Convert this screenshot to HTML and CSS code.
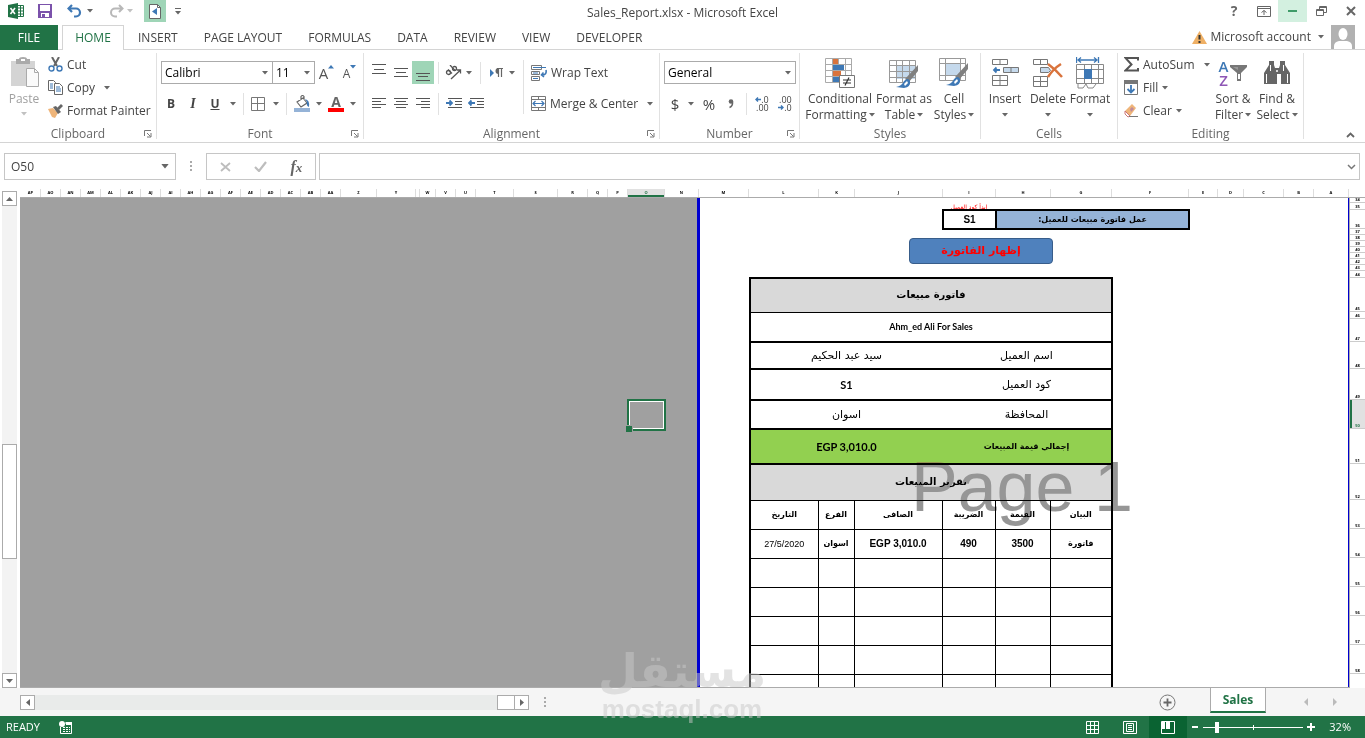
FILE: index.html
```html
<!DOCTYPE html>
<html lang="en">
<head>
<meta charset="utf-8">
<title>Sales_Report.xlsx - Microsoft Excel</title>
<link rel="stylesheet" href="styles.css">
</head>
<body>
<svg class="defs" aria-hidden="true">
  <symbol id="caret" viewBox="0 0 6 4"><path d="M0 0h6L3 3.5z" fill="#666"/></symbol>
  <symbol id="launch" viewBox="0 0 8 8"><path d="M.5 6V.5H7M3 3l3.500 3.500M7 3v4H3" fill="none" stroke="#777"/></symbol>
</svg>
<div class="app">
<header class="titlebar">
  <div class="quick">
    <svg width="16" height="16" viewBox="0 0 16 16"><path d="M9 2.500h6.500v11H9z" fill="#fff" stroke="#217346"/><path d="M10 5h5M10 8h5M10 11h5M12.500 3v10" stroke="#217346"/><path d="M0 2l10-2v16L0 14z" fill="#217346"/><path d="M2.500 5l4.500 6M7 5l-4.500 6" stroke="#fff" stroke-width="1.600"/></svg>
    <button aria-label="Save"><svg width="14" height="14" viewBox="0 0 14 14"><path d="M0 0h14v14H0z" fill="#7b52ab"/><path d="M2 1h10v6H2zM3 9h8v4H3z" fill="#fff"/><path d="M4 10h3v3H4z" fill="#7b52ab"/></svg></button>
    <button aria-label="Undo"><svg width="15" height="14" viewBox="0 0 15 14"><path d="M5 1L1.500 4.500 5 8M2 4.500h7a4 4 0 0 1 0 8H7" fill="none" stroke="#3e78b5" stroke-width="2.200"/></svg></button>
    <button aria-label="Undo list"><svg width="6" height="4"><use href="#caret"/></svg></button>
    <button class="redo" aria-label="Redo"><svg width="15" height="14" viewBox="0 0 15 14"><path d="M10 1l3.500 3.500L10 8M13 4.500H6a4 4 0 0 0 0 8h2" fill="none" stroke="#b8b8b8" stroke-width="2"/></svg></button>
    <button class="faded" aria-label="Redo list"><svg width="6" height="4"><use href="#caret"/></svg></button>
    <button class="lit" aria-label="Sheet right-to-left"><svg width="12" height="15" viewBox="0 0 12 15"><path d="M.5.5h8l3 3v11H.5z" fill="#fff" stroke="#666"/><path d="M8.500.5v3h3" fill="none" stroke="#666"/><path d="M8 4v7L3 7.500z" fill="#3e78b5"/></svg></button>
    <button aria-label="Customize toolbar"><svg width="6" height="7" viewBox="0 0 6 7"><path d="M0 .5h6" stroke="#666"/><path d="M0 3h6L3 6.500z" fill="#666"/></svg></button>
  </div>
  <h1>Sales_Report.xlsx - Microsoft Excel</h1>
  <div class="winctl">
    <button class="help" aria-label="Help">?</button>
    <button aria-label="Ribbon options"><svg width="14" height="11" viewBox="0 0 14 11"><path d="M.5.5h13v10H.5zM.5 2.500h13M7 9V4.500M4.500 6.500L7 4.500l2.500 2" fill="none" stroke="#666"/></svg></button>
    <button class="min" aria-label="Minimize"><svg width="9" height="2"><path d="M0 1h9" stroke="#3f9b69" stroke-width="2"/></svg></button>
    <button aria-label="Restore"><svg width="11" height="10" viewBox="0 0 11 10"><path d="M.5 3.500h7v6h-7zM.5 4.500h7M3.500 3V.5h7v6H8M3 1.500h7" fill="none" stroke="#666"/></svg></button>
    <button aria-label="Close"><svg width="10" height="10" viewBox="0 0 10 10"><path d="M1 1l8 8M9 1L1 9" stroke="#666" stroke-width="2"/></svg></button>
  </div>
</header>
<nav class="tabs">
  <button class="file">FILE</button>
  <button class="active">HOME</button>
  <button>INSERT</button><button>PAGE LAYOUT</button><button>FORMULAS</button><button>DATA</button><button>REVIEW</button><button>VIEW</button><button>DEVELOPER</button>
  <div class="account">
    <svg width="15" height="13" viewBox="0 0 15 13"><path d="M7.500 0L15 13H0z" fill="#efb065"/><path d="M7.500 4v4.500M7.500 10v2" stroke="#333" stroke-width="2"/></svg>
    <button>Microsoft account <svg width="6" height="4"><use href="#caret"/></svg></button>
    <svg class="avatar" width="24" height="24" viewBox="0 0 24 24"><path d="M0 0h24v24H0z" fill="#b1b1b1"/><ellipse cx="12" cy="9" rx="4.500" ry="6" fill="#fff"/><path d="M3 24v-3q0-4 5-5h8q5 1 5 5v3z" fill="#fff"/></svg>
  </div>
</nav>
<section class="ribbon">
  <div class="group clipboard">
    <div class="body">
      <button class="big paste"><svg width="30" height="32" viewBox="0 0 30 32"><path d="M0 4h24v25H0z" fill="#d4d4d4"/><path d="M5 2h3q0-2 4-2t4 2h3v5H5z" fill="#aaa"/><path d="M10 2h4v2h-4z" fill="#fff"/><path d="M15.500 11.500h8l4 4v14h-12z" fill="#fafafa" stroke="#aaa"/><path d="M23.500 11.500v4h4" fill="none" stroke="#aaa"/></svg><span>Paste</span><svg class="faded" width="6" height="4"><use href="#caret"/></svg></button>
      <div class="list">
        <button><svg width="15" height="15" viewBox="0 0 15 15"><path d="M4 0l5 9M11 0L6 9" stroke="#666" stroke-width="2"/><circle cx="3.500" cy="11.500" r="2.500" fill="none" stroke="#3e78b5" stroke-width="1.400"/><circle cx="11.500" cy="11.500" r="2.500" fill="none" stroke="#3e78b5" stroke-width="1.400"/></svg>Cut</button>
        <button><svg width="15" height="15" viewBox="0 0 15 15"><path d="M.5.5h5l2 2v8h-7z" fill="#fff" stroke="#666"/><path d="M2 4h3M2 6h3M2 8h3" stroke="#3e78b5"/><path d="M6.500 3.500h5l3 3v8h-8z" fill="#fff" stroke="#666"/><path d="M8 7h4M8 9h5M8 11h5" stroke="#3e78b5"/></svg>Copy<svg class="far" width="6" height="4"><use href="#caret"/></svg></button>
        <button><svg width="15" height="14" viewBox="0 0 15 14"><path d="M0 5l5-1 5 5-3 5-3-1z" fill="#efb57a"/><path d="M5 3l3-1 5 6-3 2z" fill="#666"/><path d="M9 4l4-4 2 2-4 4z" fill="#666"/></svg>Format Painter</button>
      </div>
    </div>
    <div class="name"><span>Clipboard</span><button aria-label="Clipboard options"><svg width="8" height="8"><use href="#launch"/></svg></button></div>
  </div>
  <div class="group font">
    <div class="body rows">
      <div class="row">
        <label class="combo face"><select aria-label="Font"><option>Calibri</option></select><svg width="6" height="4"><use href="#caret"/></svg></label>
        <label class="combo size"><select aria-label="Font size"><option>11</option></select><svg width="6" height="4"><use href="#caret"/></svg></label>
        <button class="glyph grow" aria-label="Increase font size">A<svg width="6" height="4"><path d="M0 3.500h6L3 0z" fill="#3e78b5"/></svg></button>
        <button class="glyph shrink" aria-label="Decrease font size">A<svg width="6" height="4"><path d="M0 0h6L3 3.500z" fill="#3e78b5"/></svg></button>
      </div>
      <div class="row tools">
        <button class="glyph"><b>B</b></button><button class="glyph"><i>I</i></button><button class="glyph"><u>U</u></button><button aria-label="Underline list"><svg width="6" height="4"><use href="#caret"/></svg></button><hr>
        <button aria-label="Borders"><svg width="14" height="14" viewBox="0 0 14 14"><path d="M.5.5h13v13H.5zM6.500.5v13M.5 6.500h13" fill="none" stroke="#777"/></svg></button><button aria-label="Border list"><svg width="6" height="4"><use href="#caret"/></svg></button><hr>
        <button aria-label="Fill color"><svg width="16" height="17" viewBox="0 0 16 17"><path d="M0 13h16v4H0z" fill="#95b3d7"/><path d="M3 7l6-4 4 5-6 4zM7 5V1.500q1.500-2 3 0V5" fill="none" stroke="#666" stroke-width="1.200"/><path d="M11 4q5 1 4 8-3-1-2-5z" fill="#3e78b5"/></svg></button><button aria-label="Fill list"><svg width="6" height="4"><use href="#caret"/></svg></button>
        <button class="glyph fcolor" aria-label="Font color">A</button><button aria-label="Font color list"><svg width="6" height="4"><use href="#caret"/></svg></button>
      </div>
    </div>
    <div class="name"><span>Font</span><button aria-label="Font options"><svg width="8" height="8"><use href="#launch"/></svg></button></div>
  </div>
  <div class="group alignment">
    <div class="body">
      <div class="rows">
        <div class="row al1">
          <button aria-label="Top align"><svg width="14" height="17" viewBox="0 0 14 17"><path d="M0 .5h14M2 5.500h10M0 9.500h14" stroke="#555"/></svg></button>
          <button aria-label="Middle align"><svg width="14" height="17" viewBox="0 0 14 17"><path d="M0 4.500h14M2 8.500h10M0 12.500h14" stroke="#555"/></svg></button>
          <button class="lit" aria-label="Bottom align"><svg width="14" height="17" viewBox="0 0 14 17"><path d="M0 9.500h14M2 12.500h10M0 16.500h14" stroke="#555"/></svg></button><hr>
          <button aria-label="Orientation"><svg width="17" height="15" viewBox="0 0 17 15"><g fill="none" stroke="#555" stroke-width="1.300"><circle cx="3.500" cy="7.500" r="2"/><path d="M3 4.500l4 4"/><path d="M5 0l5 5.500"/><circle cx="9.500" cy="3.500" r="2"/><path d="M6 14L15 5.500M12 5h3.500v3.500"/></g></svg></button><button aria-label="Orientation list"><svg width="6" height="4"><use href="#caret"/></svg></button><hr>
          <button aria-label="Text direction"><svg width="13" height="10" viewBox="0 0 13 10"><path d="M0 1l4 4-4 4z" fill="#3e78b5"/><path d="M7 .5h6M8.500 1v8M11.500 1v8" stroke="#666" stroke-width="1.200"/><path d="M8.500 0v6a3 3 0 0 1 0-6z" fill="#666"/></svg></button><button aria-label="Direction list"><svg width="6" height="4"><use href="#caret"/></svg></button>
        </div>
        <div class="row al2">
          <button aria-label="Align left"><svg width="14" height="11" viewBox="0 0 14 11"><path d="M0 .5h14M0 3.500h9M0 6.500h14M0 9.500h9" stroke="#555"/></svg></button>
          <button aria-label="Center"><svg width="14" height="11" viewBox="0 0 14 11"><path d="M0 .5h14M2 3.500h10M0 6.500h14M2 9.500h10" stroke="#555"/></svg></button>
          <button aria-label="Align right"><svg width="14" height="11" viewBox="0 0 14 11"><path d="M0 .5h14M5 3.500h9M0 6.500h14M5 9.500h9" stroke="#555"/></svg></button><hr>
          <button aria-label="Decrease indent"><svg width="16" height="11" viewBox="0 0 16 11"><path d="M2 .5h14M9 3.500h7M9 6.500h7M2 9.500h14" stroke="#555"/><path d="M0 5h6M3.500 2.500L6 5 3.500 7.500" stroke="#3e78b5" stroke-width="1.800" fill="none"/></svg></button>
          <button aria-label="Increase indent"><svg width="16" height="11" viewBox="0 0 16 11"><path d="M2 .5h14M9 3.500h7M9 6.500h7M2 9.500h14" stroke="#555"/><path d="M7 5H1M3.500 2.500L1 5l2.500 2.500" stroke="#3e78b5" stroke-width="1.800" fill="none"/></svg></button>
        </div>
      </div>
      <hr class="tall">
      <div class="rows wraps">
        <button><svg width="16" height="16" viewBox="0 0 16 16"><path d="M.5.5h10v4H.5zM.5 6.500h8v3h-8zM.5 11.500h8v4h-8z" fill="none" stroke="#777"/><path d="M2 2.500h13M2 8h5M2 13.500h5" stroke="#3e78b5"/><path d="M15 5q1 5-4 5M12.500 7.500L10.500 10l2.500 2" fill="none" stroke="#3e78b5" stroke-width="1.600"/></svg>Wrap Text</button>
        <button><svg width="15" height="15" viewBox="0 0 15 15"><path d="M.5.5h14v14H.5zM.5 3.500h14M.5 11.500h14M7.500.5v3M7.500 11.500v3" fill="none" stroke="#777"/><path d="M2 7.500h11M4.500 5L2 7.500 4.500 10M10.500 5L13 7.500 10.500 10" fill="none" stroke="#3e78b5" stroke-width="1.200"/></svg>Merge &amp; Center<svg class="far" width="6" height="4"><use href="#caret"/></svg></button>
      </div>
    </div>
    <div class="name"><span>Alignment</span><button aria-label="Alignment options"><svg width="8" height="8"><use href="#launch"/></svg></button></div>
  </div>
  <div class="group number">
    <div class="body rows">
      <div class="row"><label class="combo format"><select aria-label="Number format"><option>General</option></select><svg width="6" height="4"><use href="#caret"/></svg></label></div>
      <div class="row nums">
        <button class="sym">$</button><button aria-label="Currency list"><svg width="6" height="4"><use href="#caret"/></svg></button><button class="sym">%</button>
        <button aria-label="Comma style"><svg width="6" height="10" viewBox="0 0 6 10"><circle cx="3" cy="2.500" r="2.300" fill="#666"/><path d="M4.500 3q.5 4-3 5.500" stroke="#666" stroke-width="1.500" fill="none"/></svg></button><hr>
        <button class="dec" aria-label="Increase decimal"><span><svg width="6" height="5" viewBox="0 0 6 5"><path d="M6 2.500H1M3 .5l-2 2 2 2" stroke="#3e78b5" stroke-width="1.400" fill="none"/></svg>.0</span><span>.00</span></button>
        <button class="dec" aria-label="Decrease decimal"><span>.00</span><span><svg width="6" height="5" viewBox="0 0 6 5"><path d="M0 2.500h5M3 .5l2 2-2 2" stroke="#3e78b5" stroke-width="1.400" fill="none"/></svg>.0</span></button>
      </div>
    </div>
    <div class="name"><span>Number</span><button aria-label="Number options"><svg width="8" height="8"><use href="#launch"/></svg></button></div>
  </div>
  <div class="group styles">
    <div class="body">
      <button class="big"><svg width="30" height="32" viewBox="0 0 30 32"><path d="M.5 1.500h26v24H.5zM.5 7.500h26M.5 13.500h26M.5 19.500h26M7.500 1.500v24M13.500 1.500v24M20.500 1.500v24" fill="none" stroke="#aaa"/><path d="M8 2h5v5H8zM8 14h8v5H8z" fill="#d9733c"/><path d="M8 8h11v5H8zM8 20h6v5H8z" fill="#3e78b5"/><path d="M14.500 18.500h15v12h-15z" fill="#fff" stroke="#777"/><path d="M18 23h8M18 26h8M24 20.500l-4 8" stroke="#333" stroke-width="1.200"/></svg><span>Conditional</span><span>Formatting<svg width="6" height="4"><use href="#caret"/></svg></span></button>
      <button class="big"><svg width="30" height="32" viewBox="0 0 30 32"><path d="M7 8h19v14H7z" fill="#c5d9ec"/><path d="M.5 3.500h26v22H.5zM.5 8.500h26M.5 14.500h26M.5 20.500h26M7.500 3.500v22M13.500 3.500v22M20.500 3.500v22" fill="none" stroke="#999"/><path d="M29 8v6l-9 11-4-3z" fill="#808080"/><path d="M7 30q6-1 8-6 4-4 6 0 1 6-6 7z" fill="#3e78b5"/><path d="M15 27l3-3 1 2-3 3z" fill="#fff"/></svg><span>Format as</span><span>Table<svg width="6" height="4"><use href="#caret"/></svg></span></button>
      <button class="big"><svg width="30" height="32" viewBox="0 0 30 32"><path d="M6 7h15v11H6z" fill="#c5d9ec"/><path d="M.5 1.500h26v22H.5zM.5 6.500h26M.5 18.500h26M6.500 1.500v22M21.500 1.500v22" fill="none" stroke="#999"/><path d="M29 6v6l-9 11-4-3z" fill="#808080"/><path d="M7 28q6-1 8-6 4-4 6 0 1 6-6 7z" fill="#3e78b5"/><path d="M15 25l3-3 1 2-3 3z" fill="#fff"/></svg><span>Cell</span><span>Styles<svg width="6" height="4"><use href="#caret"/></svg></span></button>
    </div>
    <div class="name"><span>Styles</span></div>
  </div>
  <div class="group cells">
    <div class="body">
      <button class="big"><svg width="28" height="32" viewBox="0 0 28 32"><path d="M1.500 2.500h15v5h-15zM9 2.500v5M1.500 18.500h15v10h-15zM9 18.500v10M1.500 23.500h15" fill="none" stroke="#777"/><path d="M12.500 10.500h15v5h-15z" fill="#c5d9ec" stroke="#777"/><path d="M20 11v5" stroke="#777"/><path d="M9 13H3M5.500 10.500L3 13l2.500 2.500" fill="none" stroke="#3e78b5" stroke-width="1.800"/></svg><span>Insert</span><span><svg width="6" height="4"><use href="#caret"/></svg></span></button>
      <button class="big"><svg width="30" height="32" viewBox="0 0 30 32"><path d="M.5 2.500h14v5H.5zM7.500 2.500v5M.5 19.500h14v10H.5zM7.500 19.500v10M.5 24.500h14" fill="none" stroke="#777"/><path d="M7.500 10.500h8l2 3-2 2h-8z" fill="#c5d9ec" stroke="#777"/><path d="M15 7q7 5 14 13M28 7q-8 5-13 13" fill="none" stroke="#d9733c" stroke-width="2.500"/></svg><span>Delete</span><span><svg width="6" height="4"><use href="#caret"/></svg></span></button>
      <button class="big"><svg width="28" height="32" viewBox="0 0 28 32"><path d="M.5 0v6M22.500 0v6M2 3h19M5 .5L2 3l3 2.500M18 .5L21 3l-3 2.500" fill="none" stroke="#3e78b5" stroke-width="1.300"/><path d="M.5 7.500h27v19H.5zM.5 12.500h27M.5 21.500h27M8.500 7.500v19M15.500 7.500v19M22.500 7.500v19M2 27v4h5l3-4 2 4h5l3-4" fill="none" stroke="#888"/><path d="M8 12h8v10H8z" fill="#3e78b5"/></svg><span>Format</span><span><svg width="6" height="4"><use href="#caret"/></svg></span></button>
    </div>
    <div class="name"><span>Cells</span></div>
  </div>
  <div class="group editing">
    <div class="body">
      <div class="list">
        <button><svg width="15" height="15" viewBox="0 0 15 15"><path d="M14 3.500V1H1.500l6 6.500-6 6H14V11" fill="none" stroke="#555" stroke-width="2"/></svg>AutoSum<svg class="far" width="6" height="4"><use href="#caret"/></svg></button>
        <button><svg width="15" height="15" viewBox="0 0 15 15"><path d="M.5.5h13v14H.5z" fill="#fff" stroke="#777"/><path d="M0 0h14v4H0z" fill="#777"/><path d="M7 5v8M3.500 9L7 12.500 10.500 9" fill="none" stroke="#3e78b5" stroke-width="1.800"/></svg>Fill<svg width="6" height="4"><use href="#caret"/></svg></button>
        <button><svg width="15" height="14" viewBox="0 0 15 14"><path d="M1 7l7-7 4 4-6 8z" fill="#efb57a"/><path d="M6 5l2-2 2 2-3 3z" fill="#c08a9a"/><path d="M1 7l5 5-2 1-3-3z" fill="#fff" stroke="#c77"/><path d="M5 12.500h9" stroke="#777"/></svg>Clear<svg width="6" height="4"><use href="#caret"/></svg></button>
      </div>
      <button class="big"><span class="az"><span><b>A</b><b>Z</b></span><svg width="17" height="16" viewBox="0 0 17 16"><path d="M0 0h17v2l-6 6v8H7V8L0 2z" fill="#777"/><path d="M3 2h5v3z" fill="#999"/><path d="M8 9h2v5H8z" fill="#fff"/></svg></span><span>Sort &amp;</span><span>Filter<svg width="6" height="4"><use href="#caret"/></svg></span></button>
      <button class="big"><svg width="26" height="32" viewBox="0 0 26 32"><path d="M5 4h5v4l1 3h4l1-3V4h5v4l5 8v11h-9V17h-4v10H0V16l5-8z" fill="#666"/><path d="M2.500 17v9M6.500 8v6M19.500 8v6M23.500 17v9" stroke="#fff"/><circle cx="13" cy="14" r="1" fill="#fff"/></svg><span>Find &amp;</span><span>Select<svg width="6" height="4"><use href="#caret"/></svg></span></button>
    </div>
    <div class="name"><span>Editing</span></div>
  </div>
  <button class="collapse" aria-label="Collapse the ribbon"><svg width="9" height="6" viewBox="0 0 9 6"><path d="M1 5l3.500-3.500L8 5" fill="none" stroke="#666" stroke-width="1.800"/></svg></button>
</section>
<section class="formula">
  <label class="namebox"><input value="O50" aria-label="Name box"><svg width="8" height="5" viewBox="0 0 6 4"><use href="#caret"/></svg></label>
  <span class="dots"></span>
  <div class="fx">
    <button aria-label="Cancel"><svg width="11" height="10" viewBox="0 0 11 10"><path d="M1 1l9 8M10 1L1 9" stroke="#bdbdbd" stroke-width="1.800"/></svg></button>
    <button aria-label="Enter"><svg width="13" height="11" viewBox="0 0 13 11"><path d="M1 6l4 4 7-9" fill="none" stroke="#bdbdbd" stroke-width="2.200"/></svg></button>
    <button class="fn" aria-label="Insert function">f<small>x</small></button>
  </div>
  <label class="entry"><input aria-label="Formula"><svg width="9" height="6" viewBox="0 0 9 6"><path d="M1 1l3.500 3.500L8 1" fill="none" stroke="#777" stroke-width="1.500"/></svg></label>
</section>
<main class="sheet">
  <div class="vscroll"><button aria-label="Scroll up"><svg width="7" height="4"><path d="M0 4h7L3.500 0z" fill="#666"/></svg></button><span class="thumb"></span><button aria-label="Scroll down"><svg width="7" height="4"><path d="M0 0h7L3.500 4z" fill="#666"/></svg></button></div>
  <div class="cols"><span style="width:20px">AP</span><span style="width:20px">AO</span><span style="width:20px">AN</span><span style="width:20px">AM</span><span style="width:20px">AL</span><span style="width:20px">AK</span><span style="width:20px">AJ</span><span style="width:20px">AI</span><span style="width:20px">AH</span><span style="width:20px">AG</span><span style="width:20px">AF</span><span style="width:20px">AE</span><span style="width:20px">AD</span><span style="width:20px">AC</span><span style="width:20px">AB</span><span style="width:20px">AA</span><span style="width:36px">Z</span><span style="width:39px">Y</span><span style="width:4px"></span><span style="width:16px">W</span><span style="width:20px">V</span><span style="width:20px">U</span><span style="width:38px">T</span><span style="width:44px">S</span><span style="width:30px">R</span><span style="width:20px">Q</span><span style="width:20px">P</span><span class="on" style="width:37px">O</span><span style="width:34px">N</span><span style="width:50px">M</span><span style="width:70px">L</span><span style="width:36px">K</span><span style="width:88px">J</span><span style="width:53px">I</span><span style="width:55px">H</span><span style="width:61px">G</span><span style="width:77px">F</span><span style="width:29px">E</span><span style="width:26px">D</span><span style="width:40px">C</span><span style="width:30px">B</span><span style="width:35px">A</span></div>
  <div class="corner"></div>
  <div class="grid">
    <div class="outside"><div class="cursor"></div></div>
    <div class="page" lang="ar">
      <div class="picker">
        <p class="hint" dir="rtl">ابدأ كود العميل</p>
        <div class="pick"><span class="code">S1</span><span class="ask" dir="rtl">عمل فاتورة مبيعات للعميل:</span></div>
      </div>
      <button class="show" dir="rtl">إظهار الفاتورة</button>
      <div class="report">
      <table>
        <colgroup><col class="c1"><col class="c2"><col class="c3"><col class="c4"><col class="c5"><col class="c6"></colgroup>
        <tbody>
        <tr class="h34 head"><th colspan="6" dir="rtl">فاتورة مبيعات</th></tr>
        <tr class="h30 company thick"><th colspan="6">Ahm_ed Ali For Sales</th></tr>
        <tr class="h27 info thick"><td colspan="3" dir="rtl">سيد عبد الحكيم</td><th colspan="3" dir="rtl">اسم العميل</th></tr>
        <tr class="h31 info thick"><td colspan="3" class="latin">S1</td><th colspan="3" dir="rtl">كود العميل</th></tr>
        <tr class="h29 info thick"><td colspan="3" dir="rtl">اسوان</td><th colspan="3" dir="rtl">المحافظة</th></tr>
        <tr class="h35 total thick"><td colspan="3" class="latin">EGP 3,010.0</td><th colspan="3" dir="rtl">إجمالي قيمة المبيعات</th></tr>
        <tr class="h36 head"><th colspan="6" dir="rtl">تقرير المبيعات</th></tr>
        <tr class="h29 line"><th dir="rtl">التاريخ</th><th dir="rtl">الفرع</th><th dir="rtl">الصافى</th><th dir="rtl">الضريبة</th><th dir="rtl">القيمة</th><th dir="rtl">البيان</th></tr>
        <tr class="h29 line"><td class="date">27/5/2020</td><td dir="rtl">اسوان</td><td class="num">EGP 3,010.0</td><td class="num">490</td><td class="num">3500</td><td dir="rtl">فاتورة</td></tr>
        <tr class="h29 line"><td></td><td></td><td></td><td></td><td></td><td></td></tr>
        <tr class="h29 line"><td></td><td></td><td></td><td></td><td></td><td></td></tr>
        <tr class="h29 line"><td></td><td></td><td></td><td></td><td></td><td></td></tr>
        <tr class="h29 line"><td></td><td></td><td></td><td></td><td></td><td></td></tr>
        <tr class="h29 line"><td></td><td></td><td></td><td></td><td></td><td></td></tr>
        </tbody>
      </table>
      <div class="pagemark">Page 1</div>
      </div>
    </div>
  </div>
  <div class="rowheads"><span style="height:5px">34</span><span style="height:7px">35</span><span style="height:19px">36</span><span style="height:6px">37</span><span style="height:6px">38</span><span style="height:6px">39</span><span style="height:6px">40</span><span style="height:6px">41</span><span style="height:6px">42</span><span style="height:6px">43</span><span style="height:7px">44</span><span style="height:34px">45</span><span style="height:7px">46</span><span style="height:23px">47</span><span style="height:27px">48</span><span style="height:31px">49</span><span class="on" style="height:29px">50</span><span style="height:35px">51</span><span style="height:36px">52</span><span style="height:29px">53</span><span style="height:29px">54</span><span style="height:29px">55</span><span style="height:29px">56</span><span style="height:29px">57</span><span style="height:29px">58</span></div>
</main>
<div class="sheetbar">
  <div class="hscroll"><button aria-label="Scroll left"><svg width="4" height="7"><path d="M4 0v7L0 3.500z" fill="#666"/></svg></button><span class="track"></span><span class="thumb"></span><button aria-label="Scroll right"><svg width="4" height="7"><path d="M0 0v7l4-3.500z" fill="#666"/></svg></button></div>
  <span class="dots"></span>
  <button class="add" aria-label="New sheet"><svg width="17" height="17" viewBox="0 0 17 17"><circle cx="8.500" cy="8.500" r="7.500" fill="none" stroke="#777"/><path d="M8.500 4.500v8M4.500 8.500h8" stroke="#666" stroke-width="1.800"/></svg></button>
  <button class="sheettab">Sales</button>
  <div class="nav"><button aria-label="Previous sheets"><svg width="4" height="8"><path d="M4 0v8L0 4z" fill="#bbb"/></svg></button><button aria-label="Next sheets"><svg width="4" height="8"><path d="M0 0v8l4-4z" fill="#bbb"/></svg></button></div>
</div>
<footer class="status">
  <span>READY</span>
  <button aria-label="Record macro"><svg width="13" height="13" viewBox="0 0 13 13"><path d="M1.500 6V12.500h11V2H6" fill="none" stroke="#fff"/><path d="M7 1h6v3H7z" fill="#fff"/><path d="M4 6.500h7M4 8.500h7M4 10.500h7" stroke="#fff" stroke-dasharray="2 1"/><circle cx="3" cy="3" r="3" fill="#fff"/></svg></button>
  <div class="views">
    <button aria-label="Normal view"><svg width="13" height="13" viewBox="0 0 13 13"><path d="M.5.5h12v12H.5zM.5 4.500h12M.5 8.500h12M4.500.5v12M8.500.5v12" fill="none" stroke="#fff"/></svg></button>
    <button aria-label="Page layout view"><svg width="14" height="13" viewBox="0 0 14 13"><path d="M.5.5h13v12H.5zM3.500 2.500h7v8h-7zM5 4.500h4M5 6.500h4M5 8.500h4" fill="none" stroke="#fff"/></svg></button>
    <button class="on" aria-label="Page break preview"><svg width="14" height="13" viewBox="0 0 14 13"><path d="M.5.5h13v12H.5z" fill="none" stroke="#fff"/><path d="M1 1h3v7H1zM5 1h4v7H5z" fill="#fff"/></svg></button>
  </div>
  <button aria-label="Zoom out"><svg width="6" height="8"><path d="M0 4h6" stroke="#fff" stroke-width="2"/></svg></button>
  <input class="zoom" type="range" min="0" max="100" value="12" aria-label="Zoom">
  <button aria-label="Zoom in"><svg width="8" height="8"><path d="M0 4h8M4 0v8" stroke="#fff" stroke-width="2"/></svg></button>
  <span class="pct">32%</span>
</footer>
</div>
<div class="brand"><span lang="ar">مستقل</span><span>mostaql.com</span></div>
</body>
</html>
```
FILE: styles.css
```css
* { box-sizing: border-box; }
body { margin: 0; background: #fff; color: #444; font: 12px/16px "Open Sans", "Noto Sans", sans-serif; overflow: hidden; }
button, input, select { font: inherit; color: inherit; background: none; border: 0; padding: 0; margin: 0; outline: 0; }
button { display: flex; align-items: center; justify-content: center; white-space: nowrap; }
svg { display: block; flex: none; }
hr { margin: 0 auto; border: 0; width: 1px; height: 22px; background: #e1e1e1; }
.defs { position: absolute; width: 0; height: 0; }
.app { display: flex; flex-direction: column; height: 100vh; }
.faded { opacity: 0.4; }
.lit { background: #9fd5b7; }

.titlebar { display: grid; grid-template-columns: 1fr auto 1fr; height: 25px; }
.titlebar h1 { margin: 0; font-size: 12px; font-weight: 400; line-height: 26px; }
.quick { display: grid; grid-template-columns: 18px 38px 20px 12px 28px 12px 30px 24px; align-items: center; height: 22px; padding-left: 8px; }
.quick button { height: 22px; }
.quick .redo { justify-content: flex-end; }
.quick .lit { margin-left: 8px; }
.winctl { display: grid; grid-template-columns: 30px 29px 29px 29px 29px; justify-content: end; height: 22px; }
.winctl .help { font-size: 14px; font-weight: 700; color: #666; }
.winctl .min { background: #d3f0e0; }

.tabs { display: flex; height: 25px; border-bottom: 1px solid #d4d4d4; }
.tabs > button { padding: 0 13px; height: 25px; }
.tabs .file { width: 58px; padding: 0; background: #217346; color: #fff; }
.tabs .active { width: 62px; padding: 0; margin: 0 1px 0 4px; border: 1px solid #d4d4d4; border-bottom: 0; background: #fff; color: #217346; }
.account { display: flex; align-items: center; gap: 4px; margin-left: auto; margin-right: 10px; }
.account button { gap: 7px; }
.avatar { margin-left: 3px; }

.ribbon { display: flex; height: 93px; padding-top: 3px; border-bottom: 1px solid #d4d4d4; }
.group { display: flex; flex-direction: column; height: 86px; border-right: 1px solid #e1e1e1; }
.body { display: flex; flex: none; height: 73px; }
.name { display: grid; flex: none; grid-template-columns: 16px 1fr 16px; height: 16px; line-height: 16px; text-align: center; color: #666; }
.name span { grid-column: 2; }
.list { display: flex; flex-direction: column; }
.list button { height: 23px; gap: 4px; justify-content: flex-start; }
.far { margin-left: 5px; }
.big { flex-direction: column; justify-content: flex-start; padding-top: 4px; }
.big > span { display: flex; align-items: center; gap: 2px; height: 16px; }
.big > svg:first-child { margin-bottom: 2px; }
.rows { display: flex; flex-direction: column; gap: 8px; padding-top: 8px; }
.row { display: grid; align-items: center; height: 23px; }
.row button { height: 23px; }
.combo { display: flex; align-items: center; height: 23px; border: 1px solid #ababab; padding: 0 4px 0 3px; color: #000; }
.combo select { flex: 1; min-width: 0; appearance: none; }
.clipboard { width: 157px; }
.clipboard .body { padding-left: 8px; gap: 8px; }
.paste { width: 32px; }
.paste > svg:first-child { margin-left: 4px; }
.paste span { color: #a0a0a0; }
.paste > .faded { margin-top: 5px; }
.font { width: 207px; }
.font .body { padding-left: 3px; }
.font .row:first-child { display: flex; padding-left: 1px; }
.face { width: 112px; }
.size { width: 43px; margin-left: -1px; }
.glyph { font-size: 12px; }
.glyph b, .glyph u { font-weight: 700; }
.glyph i { font-family: "Liberation Serif", serif; font-size: 14px; font-weight: 700; }
.row .grow, .row .shrink { align-items: flex-start; width: 23px; color: #555; }
.grow { font-size: 15px; line-height: 25px; }
.shrink { line-height: 25px; }
.grow svg, .shrink svg { margin-top: 4px; }
.tools { grid-template-columns: 22px 22px 22px 14px 6px 24px 12px 8px 24px 10px 24px 10px; }
.tools .fcolor { height: 16px; margin: 0 4px; border-bottom: 4px solid #f00; font-size: 14px; font-weight: 700; line-height: 12px; color: #666; }
.alignment { width: 296px; }
.alignment .body { padding-left: 4px; }
.al1 { grid-template-columns: 22px 22px 22px 8px 22px 10px 12px 20px 12px; }
.al2 { grid-template-columns: 22px 22px 22px 8px 24px 20px; }
.alignment .tall { height: 54px; margin: 7px 7px 0 5px; }
.wraps button { height: 23px; gap: 4px; justify-content: flex-start; }
.number { width: 140px; }
.number .body { padding-left: 4px; }
.format { width: 132px; }
.nums { grid-template-columns: 22px 10px 26px 18px 12px 20px 26px; }
.sym { font-size: 15px; }
.row .dec { flex-direction: column; align-items: flex-end; justify-self: center; font-size: 9px; line-height: 8px; height: 16px; }
.dec span { display: flex; align-items: center; }
.styles { width: 181px; }
.styles .body { display: grid; grid-template-columns: 76px 52px 48px; padding-left: 2px; }
.cells { width: 137px; }
.cells .body { display: grid; grid-template-columns: 46px 40px 44px; padding-left: 1px; }
.editing { width: 186px; }
.editing .body { display: grid; grid-template-columns: 88px 42px 46px; padding-left: 6px; }
.big > .az { height: 32px; margin-bottom: 2px; gap: 2px; }
.az span { display: flex; flex-direction: column; }
.az b { font-size: 15px; line-height: 14px; font-weight: 600; color: #3e78b5; }
.az b + b { color: #8e57b5; }
.collapse { margin: auto 10px 4px auto; }

.formula { display: flex; height: 46px; padding: 10px 5px 9px 4px; }
.namebox, .fx, .entry { display: flex; align-items: center; border: 1px solid #c6c6c6; }
.namebox { width: 172px; padding: 0 6px; }
.namebox input, .entry input { flex: 1; min-width: 0; }
.dots { width: 2px; height: 11px; background: repeating-linear-gradient(#aaa 0 2px, transparent 2px 4px); }
.formula .dots { margin: 8px 14px; }
.fx { width: 110px; padding: 0 1px; }
.fx button { flex: 1; }
.fx .fn { align-items: baseline; font: italic 700 16px "Liberation Serif", serif; color: #666; }
.fn small { font-size: 13px; }
.entry { flex: 1; margin-left: 3px; padding-right: 3px; }

.sheet { flex: 1; min-height: 0; display: grid; grid-template: 9px 1fr / 20px 1fr 16px; }
.vscroll { grid-row: 1 / 3; display: flex; flex-direction: column; margin: 2px 3px 0 2px; background: #f3f3f3; }
.vscroll button, .hscroll button { width: 15px; height: 15px; border: 1px solid #ababab; background: #fff; }
.vscroll .thumb { height: 115px; margin: 238px 0 auto; border: 1px solid #ababab; background: #fff; }
.cols { display: flex; justify-content: flex-end; overflow: hidden; border-bottom: 1px solid #ababab; }
.cols span { flex: none; border-right: 1px solid #ddd; font-size: 4px; line-height: 7px; font-weight: 700; text-align: center; color: #000; }
.cols .on { background: #e1e1e1; color: #217346; box-shadow: inset 0 -2px #217346; }
.corner { border-bottom: 1px solid #ababab; }
.grid { display: flex; min-height: 0; overflow: hidden; border-bottom: 1px solid #ababab; }
.outside { flex: 1; position: relative; background: #a0a0a0; border-right: 3px solid #0000d0; }
.cursor { position: absolute; top: 201px; right: 31px; width: 39px; height: 32px; border: 2px solid #217346; box-shadow: inset 0 0 0 1px #fff; }
.cursor::after { content: ""; position: absolute; left: -3px; bottom: -3px; width: 6px; height: 6px; background: #217346; border: 1px solid #a0a0a0; border-width: 1px 1px 0 0; }
.page { flex: none; width: 649px; padding-left: 49px; border-right: 1px solid #0000d0; color: #000; font-family: "DejaVu Sans", sans-serif; }
.picker { margin-left: 193px; width: 248px; padding-top: 5px; }
.hint { margin: 0 0 0 6px; width: 42px; height: 6px; overflow: hidden; font-size: 6px; line-height: 8px; color: #f00; text-align: center; white-space: nowrap; }
.pick { display: flex; height: 21px; border: 2px solid #000; font-size: 8px; line-height: 17px; text-align: center; font-weight: 700; }
.code { width: 53px; border-right: 2px solid #000; font: 700 10px/17px "Liberation Sans", sans-serif; }
.ask { flex: 1; background: #95b3d7; }
.show { width: 144px; height: 26px; margin: 8px 0 13px 160px; border: 1px solid #385d8a; border-radius: 4px; background: #4f81bd; color: #f00; font-size: 11px; font-weight: 700; }
.report { position: relative; width: 364px; }
table { width: 364px; table-layout: fixed; border-collapse: collapse; border: 2px solid #000; font-size: 10px; line-height: 14px; }
.c1 { width: 68px; } .c2 { width: 36px; } .c3 { width: 88px; } .c4 { width: 53px; } .c5 { width: 55px; }
th, td { padding: 0; text-align: center; vertical-align: middle; font-weight: 400; white-space: nowrap; border-bottom: 1px solid #000; }
.h27 { height: 27px; } .h29 { height: 29px; } .h30 { height: 30px; } .h31 { height: 31px; } .h34 { height: 34px; } .h35 { height: 35px; } .h36 { height: 36px; }
.thick > * { border-bottom-width: 2px; }
.head { background: #d9d9d9; }
.info > * { font-size: 11px; }
.head th { font-size: 10px; font-weight: 700; }
.company th { font: 700 9px/14px Lato, sans-serif; }
.thick .latin { font: 700 11px/14px Lato, sans-serif; }
.total { background: #92d050; }
.total th { font-size: 8px; font-weight: 700; }
.line > * { border-right: 1px solid #000; font-size: 8px; font-weight: 700; }
.line .date { font: 9px "Liberation Sans", sans-serif; }
.line .num { font: 700 10px "Liberation Sans", sans-serif; }
.pagemark { position: absolute; left: 162px; top: 170px; font: 70px/80px "Liberation Sans", sans-serif; color: #969696; mix-blend-mode: darken; white-space: nowrap; }
.rowheads { border-left: 1px solid #ababab; overflow: hidden; }
.rowheads span { display: flex; align-items: flex-end; justify-content: center; border-bottom: 1px solid #ccc; font-size: 4px; line-height: 4px; font-weight: 700; color: #000; }
.rowheads .on { background: #e1e1e1; color: #217346; box-shadow: inset 2px 0 #217346; }

.sheetbar { display: flex; height: 28px; background: #f5f5f5; }
.hscroll { display: flex; width: 509px; height: 15px; margin: 7px 15px 0 20px; background: #e9ebea; }
.hscroll .track { flex: 1; }
.hscroll .thumb { width: 17px; border: 1px solid #ababab; border-right: 0; background: #fff; }
.sheetbar .dots { margin-top: 9px; }
.add { margin-left: auto; margin-right: 34px; }
.sheetbar .add { height: 28px; }
.sheettab { width: 56px; height: 25px; border: 1px solid #ababab; border-width: 0 1px 2px; border-bottom-color: #217346; background: #fff; color: #217346; font-size: 12px; font-weight: 700; }
.nav { display: flex; gap: 25px; margin: 0 28px 0 38px; }
.status { display: flex; align-items: center; height: 22px; padding: 0 14px 0 6px; background: #217346; color: #fff; font-size: 11px; }
.status > button:nth-of-type(1) { margin-left: 19px; }
.views { display: flex; margin: 0 5px 0 auto; }
.views button { width: 38px; height: 22px; }
.views .on { background: #0a6332; }
.zoom { width: 100px; height: 12px; margin: 0 4px 0 5px; appearance: none; background: linear-gradient(#fff, #fff) center / 1px 5px no-repeat, linear-gradient(#fff, #fff) center / 100% 1px no-repeat; }
.zoom::-webkit-slider-thumb { appearance: none; width: 4px; height: 11px; background: #fff; }
.pct { width: 36px; text-align: right; }
.brand { position: absolute; left: 599px; bottom: 16px; width: 166px; display: flex; flex-direction: column; align-items: center; color: #c8c8c8; opacity: 0.5; font: 700 26px/26px "Liberation Sans", sans-serif; pointer-events: none; }
.brand [lang] { font: 700 46px/50px "DejaVu Sans", sans-serif; }
```
